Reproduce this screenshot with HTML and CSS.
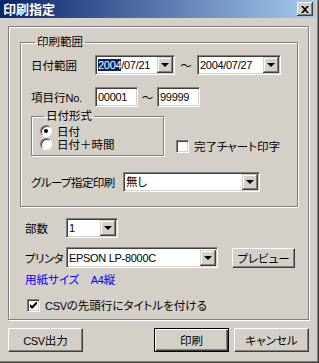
FILE: index.html
```html
<!DOCTYPE html>
<html lang="ja">
<head>
  <meta charset="UTF-8" />
  <title>印刷指定</title>
  <link rel="stylesheet" href="styles.css">
</head>
<body>
  <div class="window">
    <div class="titlebar">
      <span class="title">印刷指定</span>
      <div class="close-btn">
        <svg width="8" height="7" viewBox="0 0 8 7"><path d="M0 0h2l2 2 2-2h2L5 3.5 8 7H6L4 5 2 7H0l3-3.5z" fill="#000"/></svg>
      </div>
    </div>

    <div class="frame">
      <fieldset class="group">
        <legend>印刷範囲</legend>

        <div class="row row-date">
          <span class="label">日付範囲</span>
          <div class="combo combo-date">
            <span class="value latin"><span class="sel">2004</span>/07/21</span>
            <div class="drop"><i></i></div>
          </div>
          <span class="tilde">～</span>
          <div class="combo combo-date2">
            <span class="value latin">2004/07/27</span>
            <div class="drop"><i></i></div>
          </div>
        </div>

        <div class="row row-no">
          <span class="label">項目行<span class="latin">No.</span></span>
          <div class="field field-no latin">00001</div>
          <span class="tilde">～</span>
          <div class="field field-no latin">99999</div>
        </div>

        <div class="row row-format">
          <fieldset class="subgroup">
            <legend>日付形式</legend>
            <label class="radio-line"><span class="radio checked"></span>日付</label>
            <label class="radio-line"><span class="radio"></span>日付＋時間</label>
          </fieldset>
          <label class="check-line check-chart"><span class="check"></span>完了チャート印字</label>
        </div>

        <div class="row row-groupsel">
          <span class="label tight">グループ指定印刷</span>
          <div class="combo combo-group">
            <span class="value">無し</span>
            <div class="drop"><i></i></div>
          </div>
        </div>
      </fieldset>

      <div class="row row-copies">
        <span class="label2">部数</span>
        <div class="combo combo-copies">
          <span class="value latin">1</span>
          <div class="drop"><i></i></div>
        </div>
      </div>

      <div class="row row-printer">
        <span class="label2 tight">プリンタ</span>
        <div class="combo combo-printer">
          <span class="value latin">EPSON LP-8000C</span>
          <div class="drop"><i></i></div>
        </div>
        <button class="btn btn-preview">プレビュー</button>
      </div>

      <div class="paper">用紙サイズ　<span class="latin">A4</span>縦</div>

      <label class="check-line check-csv">
        <span class="check checked">
          <svg width="7" height="7" viewBox="0 0 7 7"><path d="M0 2v3l2 2 5-5V-1L2 4z" fill="#000"/></svg>
        </span><span><span class="latin">CSV</span>の先頭行にタイトルを付ける</span></label>
    </div>

    <div class="footer">
      <button class="btn btn-wide"><span class="latin">CSV</span>出力</button>
      <div class="footer-right">
        <button class="btn btn-wide btn-default">印刷</button>
        <button class="btn btn-wide">キャンセル</button>
      </div>
    </div>
  </div>
</body>
</html>
```

FILE: styles.css
```css
body {
  margin: 0;
  background: #d4d0c8;
  font-family: "Liberation Sans", "Noto Sans CJK JP", sans-serif;
  font-size: 11.5px;
  color: #000;
  font-feature-settings: "palt";
  white-space: nowrap;
}

.latin {
  font-size: 11px;
  letter-spacing: -0.3px;
}
.tight {
  letter-spacing: -0.6px;
}

.window {
  width: 319px;
  height: 363px;
  box-sizing: border-box;
  background: #d4d0c8;
  box-shadow: inset -1px -1px #404040, inset -2px -2px #808080;
}

.titlebar {
  width: 316px;
  height: 18px;
  box-sizing: border-box;
  display: flex;
  align-items: center;
  justify-content: space-between;
  padding: 0 3px 0 3px;
  background: linear-gradient(to right, #0a246a, #a6caf0);
}
.title {
  color: #fff;
  font-family: "Noto Sans CJK JP", sans-serif;
  font-weight: bold;
  font-size: 13px;
  line-height: 18px;
}
.close-btn {
  width: 16px;
  height: 14px;
  box-sizing: border-box;
  display: flex;
  align-items: center;
  justify-content: center;
  background: #d4d0c8;
  box-shadow: inset -1px -1px #404040, inset 1px 1px #fff, inset -2px -2px #808080;
}

/* outer etched frame */
.frame {
  margin: 8px 0 0 8px;
  width: 301px;
  height: 294px;
  box-sizing: border-box;
  border: 1px solid #808080;
  box-shadow: inset 1px 1px #fff, 1px 1px #fff;
  padding: 8px 9px 0 11px;
}

fieldset {
  margin: 0;
  border: 1px solid #808080;
  box-shadow: inset 1px 1px #fff, 1px 1px #fff;
}
legend {
  padding: 0 2px;
  line-height: 14px;
  margin-left: 4px;
}

.group {
  width: 278px;
  height: 172px;
  box-sizing: border-box;
  padding: 6px 0 0 10px;
}

.row {
  display: flex;
  align-items: center;
}
.label {
  width: 64px;
  flex: none;
}

/* sunken field */
.field, .combo {
  height: 20px;
  box-sizing: border-box;
  background: #fff;
  border: 1px solid;
  border-color: #808080 #fff #fff #808080;
  box-shadow: inset 1px 1px #404040, inset -1px -1px #d4d0c8;
  display: flex;
  align-items: center;
  flex: none;
}
.value {
  flex: 1;
  padding-left: 2px;
  line-height: 14px;
  overflow: hidden;
}
.sel {
  background: #0a246a;
  color: #fff;
}
.drop {
  width: 16px;
  height: 16px;
  margin-right: 1px;
  box-sizing: border-box;
  background: #d4d0c8;
  box-shadow: inset -1px -1px #404040, inset 1px 1px #d4d0c8, inset -2px -2px #808080, inset 2px 2px #fff;
  display: flex;
  align-items: center;
  justify-content: center;
  flex: none;
}
.drop i {
  width: 0;
  height: 0;
  border-left: 4px solid transparent;
  border-right: 4px solid transparent;
  border-top: 4px solid #000;
  margin-left: -1px;
}

.tilde {
  width: 22px;
  text-align: center;
  flex: none;
}

.row-date {
  height: 20px;
}
.combo-date { width: 80px; }
.combo-date2 { width: 84px; }

.row-no {
  margin-top: 12px;
  height: 20px;
}
.field-no {
  width: 43px;
  padding-left: 2px;
}
.row-no .tilde { width: 19px; }

.row-format {
  align-items: flex-end;
  margin-top: 2px;
}
.subgroup {
  width: 133px;
  height: 47px;
  box-sizing: border-box;
  padding: 1px 0 0 8px;
  flex: none;
}
.radio-line {
  display: flex;
  align-items: center;
  height: 13px;
  gap: 5px;
}
.radio {
  width: 12px;
  height: 12px;
  box-sizing: border-box;
  border-radius: 50%;
  background: #fff;
  border: 1px solid;
  border-color: #808080 #fff #fff #808080;
  box-shadow: inset 1px 1px #404040;
  display: flex;
  align-items: center;
  justify-content: center;
}
.radio.checked::after {
  content: "";
  width: 4px;
  height: 4px;
  border-radius: 50%;
  background: #000;
}

.check-line {
  display: flex;
  align-items: center;
  gap: 5px;
}
.check {
  width: 13px;
  height: 13px;
  box-sizing: border-box;
  background: #fff;
  border: 1px solid;
  border-color: #808080 #fff #fff #808080;
  box-shadow: inset 1px 1px #404040, inset -1px -1px #d4d0c8;
  display: flex;
  align-items: center;
  justify-content: center;
  flex: none;
}
.check-chart {
  margin-left: 12px;
  margin-bottom: 2px;
}

.row-groupsel {
  margin-top: 16px;
}
.row-groupsel .label { width: 92px; }
.combo-group { width: 137px; }

.row-copies {
  margin-top: 11px;
  margin-left: 5px;
}
.label2 {
  width: 41px;
  flex: none;
}
.combo-copies { width: 52px; }

.row-printer {
  margin-top: 9px;
  margin-left: 5px;
  height: 21px;
}
.combo-printer { width: 152px; height: 21px; }

.btn {
  font-family: inherit;
  font-size: 11.5px;
  font-feature-settings: "palt";
  background: #d4d0c8;
  color: #000;
  border: 1px solid;
  border-color: #fff #404040 #404040 #fff;
  box-shadow: inset -1px -1px #808080;
  padding: 0;
  box-sizing: border-box;
}
.btn-preview {
  width: 63px;
  height: 20px;
  margin-left: 14px;
}

.paper {
  color: #0000ff;
  margin: 5px 0 0 5px;
  line-height: 14px;
}

.check-csv {
  margin: 10px 0 0 7px;
}

.footer {
  display: flex;
  justify-content: space-between;
  padding: 8px 10px 0 8px;
}
.footer-right {
  display: flex;
  gap: 5px;
}
.btn-wide {
  width: 75px;
  height: 24px;
}
.btn-default {
  border: 1px solid #000;
  box-shadow: inset 1px 1px #fff, inset -1px -1px #404040, inset -2px -2px #808080;
}
```
